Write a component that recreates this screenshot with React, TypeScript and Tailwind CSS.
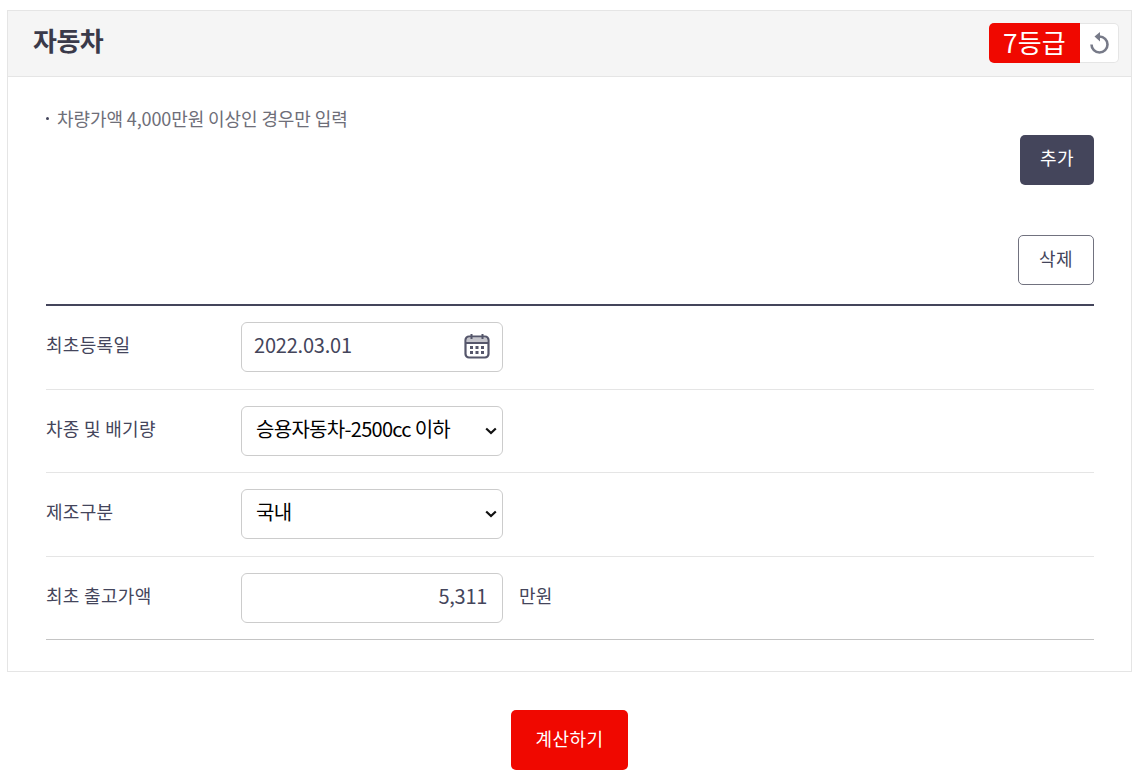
import React from 'react';

const fieldClass =
  'h-[50px] w-[262px] rounded-[6px] border border-[#cccccc] bg-white text-[20px] outline-none';

const CalendarIcon = () => (
  <svg width="26" height="26" viewBox="0 0 26 26" fill="none" className="-mt-[2px]">
    <path d="M3 5h20v5H3z" fill="#55566b" opacity="0.35" />
    <rect x="1.5" y="3.5" width="23" height="21" rx="3.5" stroke="#55566b" strokeWidth="2.2" />
    <path d="M2 10h22" stroke="#55566b" strokeWidth="2" />
    <path d="M7.5 1v5M18.5 1v5" stroke="#55566b" strokeWidth="2" />
    <g fill="#55566b">
      <rect x="6" y="13" width="3" height="3" />
      <rect x="11.5" y="13" width="3" height="3" />
      <rect x="17" y="13" width="3" height="3" />
      <rect x="6" y="18" width="3" height="3" />
      <rect x="11.5" y="18" width="3" height="3" />
      <rect x="17" y="18" width="3" height="3" />
    </g>
  </svg>
);

const ResetIcon = () => (
  <svg width="22" height="24" viewBox="0 0 22 24" fill="none">
    <path d="M11.5 5.5a8 8 0 1 1-8 8" stroke="#777a88" strokeWidth="2.6" />
    <path d="M6.5 5.5 12 1v9.5z" fill="#777a88" />
  </svg>
);

const Chevron = () => (
  <svg
    width="12"
    height="8"
    viewBox="0 0 12 8"
    fill="none"
    className="absolute right-[6px] top-[21px] pointer-events-none"
  >
    <path d="M1.2 1.5 6 6l4.8-4.5" stroke="#111111" strokeWidth="2.2" />
  </svg>
);

interface RowProps {
  label: string;
  last?: boolean;
  children: React.ReactNode;
}

const Row: React.FC<RowProps> = ({ label, last, children }) => (
  <div className={`flex items-center h-[83.6px] border-b ${last ? 'border-[#c4c4c4]' : 'border-[#e5e5e5]'}`}>
    <div className="w-[195px] pb-[5px] text-[18px] tracking-[0.3px] text-[#44455b]">{label}</div>
    {children}
  </div>
);

const SelectField: React.FC<{ text: string }> = ({ text }) => (
  <div className="relative">
    <select className={`${fieldClass} appearance-none pl-[14px] pb-[4px] tracking-[-0.7px] text-black`} defaultValue="a">
      <option value="a">{text}</option>
    </select>
    <Chevron />
  </div>
);

export default function App() {
  return (
    <div
      className="bg-white h-[778px] pt-[10px] pl-[7px] overflow-hidden"
      style={{ fontFamily: '"Noto Sans CJK KR", "Noto Sans", sans-serif' }}
    >
      <div className="border border-[#e5e5e5]">
        {/* Header */}
        <div className="h-[66px] bg-[#f5f5f5] border-b border-[#e5e5e5] flex justify-between pl-[25px] pr-3 pt-3">
          <h2 className="h-10 leading-[34px] text-[26px] font-bold tracking-[-0.5px] text-[#3a3a4a]">자동차</h2>
          <div className="flex items-start">
            <div className="h-10 w-[91px] pb-[3px] bg-[#f00800] rounded-l-[5px] text-white text-[26px] tracking-[0.2px] flex items-center justify-center">
              7등급
            </div>
            <button className="h-10 w-[39px] bg-white border border-[#e5e5e5] border-l-0 rounded-r-[5px] flex items-center justify-center">
              <ResetIcon />
            </button>
          </div>
        </div>

        {/* Body */}
        <div className="pl-[38px] pr-[37px] pt-[29px] pb-[30.6px]">
          <div className="flex items-center h-6 text-[18px] tracking-[-0.1px] text-[#6e6e78]">
            <span className="w-[3px] h-[3px] bg-[#44455b] rounded-full mr-[8px]" />
            차량가액 4,000만원 이상인 경우만 입력
          </div>
          <div className="flex justify-end mt-[5px]">
            <button className="w-[74px] h-[50px] pb-[5px] rounded-[5px] bg-[#44455b] text-white text-[18px] tracking-[0.4px]">
              추가
            </button>
          </div>
          <div className="flex justify-end mt-[50px] pb-[19px] border-b-2 border-[#44455b]">
            <button className="w-[76px] h-[50px] pb-1 rounded-[5px] bg-white border border-[#71727f] text-[#44455b] text-[18px] tracking-[0.4px]">
              삭제
            </button>
          </div>

          <Row label="최초등록일">
            <div className={`${fieldClass} flex items-center justify-between pl-3 pr-3 tracking-[-0.2px] text-[#44455b]`}>
              <span className="pb-[5px]">2022.03.01</span>
              <CalendarIcon />
            </div>
          </Row>
          <Row label="차종 및 배기량">
            <SelectField text="승용자동차-2500cc 이하" />
          </Row>
          <Row label="제조구분">
            <SelectField text="국내" />
          </Row>
          <Row label="최초 출고가액" last>
            <input
              readOnly
              value="5,311"
              className={`${fieldClass} px-[15px] pb-[5px] text-right tracking-[-0.3px] text-[#44455b]`}
            />
            <span className="ml-4 pb-[5px] text-[18px] tracking-[0.3px] text-[#44455b]">만원</span>
          </Row>
        </div>
      </div>

      <div className="flex justify-center mt-[38px]">
        <button className="w-[117px] h-[60px] pb-[2px] rounded-[5px] bg-[#f00800] text-white text-[18px] tracking-[0.4px]">
          계산하기
        </button>
      </div>
    </div>
  );
}
